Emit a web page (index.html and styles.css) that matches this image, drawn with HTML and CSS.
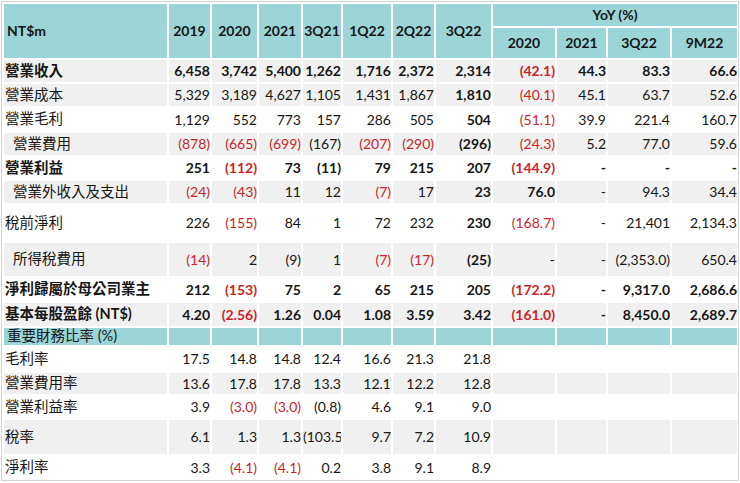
FILE: index.html
```html
<!DOCTYPE html>
<html lang="zh-Hant">
<head>
<meta charset="utf-8">
<title>NT$m</title>
<link rel="stylesheet" href="styles.css">
</head>
<body>
<div class="frame">
  <div class="sheet">
    <div class="c h hs hl">NT$m</div>
    <div class="c h hs">2019</div>
    <div class="c h hs">2020</div>
    <div class="c h hs">2021</div>
    <div class="c h hs">3Q21</div>
    <div class="c h hs">1Q22</div>
    <div class="c h hs">2Q22</div>
    <div class="c h hs">3Q22</div>
    <div class="c h yoy">YoY (%)</div>
    <div class="c h">2020</div>
    <div class="c h">2021</div>
    <div class="c h">3Q22</div>
    <div class="c h">9M22</div>

    <div class="row g b">
      <div class="c l">營業收入</div>
      <div class="c">6,458</div><div class="c">3,742</div><div class="c">5,400</div><div class="c">1,262</div><div class="c">1,716</div><div class="c">2,372</div><div class="c">2,314</div>
      <div class="c r">(42.1)</div><div class="c">44.3</div><div class="c">83.3</div><div class="c">66.6</div>
    </div>
    <div class="row g">
      <div class="c l">營業成本</div>
      <div class="c">5,329</div><div class="c">3,189</div><div class="c">4,627</div><div class="c">1,105</div><div class="c">1,431</div><div class="c">1,867</div><div class="c bd">1,810</div>
      <div class="c r">(40.1)</div><div class="c">45.1</div><div class="c">63.7</div><div class="c">52.6</div>
    </div>
    <div class="row w">
      <div class="c l">營業毛利</div>
      <div class="c">1,129</div><div class="c">552</div><div class="c">773</div><div class="c">157</div><div class="c">286</div><div class="c">505</div><div class="c bd">504</div>
      <div class="c r">(51.1)</div><div class="c">39.9</div><div class="c">221.4</div><div class="c">160.7</div>
    </div>
    <div class="row g">
      <div class="c l ind">營業費用</div>
      <div class="c r">(878)</div><div class="c r">(665)</div><div class="c r">(699)</div><div class="c">(167)</div><div class="c r">(207)</div><div class="c r">(290)</div><div class="c bd">(296)</div>
      <div class="c r">(24.3)</div><div class="c">5.2</div><div class="c">77.0</div><div class="c">59.6</div>
    </div>
    <div class="row w b">
      <div class="c l">營業利益</div>
      <div class="c">251</div><div class="c r">(112)</div><div class="c">73</div><div class="c">(11)</div><div class="c">79</div><div class="c">215</div><div class="c">207</div>
      <div class="c r">(144.9)</div><div class="c">-</div><div class="c">-</div><div class="c">-</div>
    </div>
    <div class="row g">
      <div class="c l ind">營業外收入及支出</div>
      <div class="c r">(24)</div><div class="c r">(43)</div><div class="c">11</div><div class="c">12</div><div class="c r">(7)</div><div class="c">17</div><div class="c bd">23</div>
      <div class="c bd">76.0</div><div class="c">-</div><div class="c">94.3</div><div class="c">34.4</div>
    </div>
    <div class="row w">
      <div class="c l">稅前淨利</div>
      <div class="c">226</div><div class="c r">(155)</div><div class="c">84</div><div class="c">1</div><div class="c">72</div><div class="c">232</div><div class="c bd">230</div>
      <div class="c r">(168.7)</div><div class="c">-</div><div class="c">21,401</div><div class="c">2,134.3</div>
    </div>
    <div class="row g">
      <div class="c l ind">所得稅費用</div>
      <div class="c r">(14)</div><div class="c">2</div><div class="c">(9)</div><div class="c">1</div><div class="c r">(7)</div><div class="c r">(17)</div><div class="c bd">(25)</div>
      <div class="c">-</div><div class="c">-</div><div class="c">(2,353.0)</div><div class="c">650.4</div>
    </div>
    <div class="row w b">
      <div class="c l">淨利歸屬於母公司業主</div>
      <div class="c">212</div><div class="c r">(153)</div><div class="c">75</div><div class="c">2</div><div class="c">65</div><div class="c">215</div><div class="c">205</div>
      <div class="c r">(172.2)</div><div class="c">-</div><div class="c">9,317.0</div><div class="c">2,686.6</div>
    </div>
    <div class="row g b">
      <div class="c l">基本每股盈餘 (NT$)</div>
      <div class="c">4.20</div><div class="c r">(2.56)</div><div class="c">1.26</div><div class="c">0.04</div><div class="c">1.08</div><div class="c">3.59</div><div class="c">3.42</div>
      <div class="c r">(161.0)</div><div class="c">-</div><div class="c">8,450.0</div><div class="c">2,689.7</div>
    </div>
    <div class="row t">
      <div class="c l sec">重要財務比率 (%)</div>
      <div class="c"></div><div class="c"></div><div class="c"></div><div class="c"></div><div class="c"></div><div class="c"></div><div class="c"></div>
      <div class="c"></div><div class="c"></div><div class="c"></div><div class="c"></div>
    </div>
    <div class="row w">
      <div class="c l">毛利率</div>
      <div class="c">17.5</div><div class="c">14.8</div><div class="c">14.8</div><div class="c">12.4</div><div class="c">16.6</div><div class="c">21.3</div><div class="c">21.8</div>
      <div class="c"></div><div class="c"></div><div class="c"></div><div class="c"></div>
    </div>
    <div class="row g">
      <div class="c l">營業費用率</div>
      <div class="c">13.6</div><div class="c">17.8</div><div class="c">17.8</div><div class="c">13.3</div><div class="c">12.1</div><div class="c">12.2</div><div class="c">12.8</div>
      <div class="c"></div><div class="c"></div><div class="c"></div><div class="c"></div>
    </div>
    <div class="row w">
      <div class="c l">營業利益率</div>
      <div class="c">3.9</div><div class="c r">(3.0)</div><div class="c r">(3.0)</div><div class="c">(0.8)</div><div class="c">4.6</div><div class="c">9.1</div><div class="c">9.0</div>
      <div class="c"></div><div class="c"></div><div class="c"></div><div class="c"></div>
    </div>
    <div class="row g">
      <div class="c l">稅率</div>
      <div class="c">6.1</div><div class="c">1.3</div><div class="c">1.3</div><div class="c clip">(103.5)</div><div class="c">9.7</div><div class="c">7.2</div><div class="c">10.9</div>
      <div class="c"></div><div class="c"></div><div class="c"></div><div class="c"></div>
    </div>
    <div class="row w">
      <div class="c l">淨利率</div>
      <div class="c">3.3</div><div class="c r">(4.1)</div><div class="c r">(4.1)</div><div class="c">0.2</div><div class="c">3.8</div><div class="c">9.1</div><div class="c">8.9</div>
      <div class="c"></div><div class="c"></div><div class="c"></div><div class="c"></div>
    </div>
  </div>
</div>
</body>
</html>
```

FILE: styles.css
```css
body {
  margin: 0;
  background: #ffffff;
  font-family: "Lato", "Noto Sans CJK TC", sans-serif;
  color: #161616;
}

.frame {
  margin: 1px;
  width: 733px;
  border: 1px solid #d4d4d4;
  padding: 2px 1px 1px 2px;
  background: #ffffff;
}

.sheet {
  display: grid;
  grid-template-columns: 163px 41px 45px 42px 38px 48px 41px 55px 62px 49px 62px 65px;
  grid-template-rows: 22px 30px 22px 22px 23px 22px 22px 22px 36px 33px 23px 23px 17px 24px 21px 22px 34px 23px;
  gap: 2px;
}

.row {
  display: contents;
}

.c {
  display: flex;
  align-items: center;
  justify-content: flex-end;
  font-size: 14px;
  line-height: 1;
  white-space: nowrap;
  overflow: hidden;
  padding-right: 0;
}

.g > .c {
  background: #f0f0f0;
}

.w > .c {
  background: #ffffff;
}

.t > .c {
  background: #9cd5d7;
}

.h {
  background: #9cd5d7;
  font-weight: 700;
  justify-content: center;
  font-size: 14px;
}

.hs {
  grid-row: span 2;
}

.hl {
  justify-content: flex-start;
  padding-left: 3px;
}

.yoy {
  grid-column: span 4;
}

.l {
  justify-content: flex-start;
  font-size: 14.5px;
  padding-left: 1px;
}

.ind {
  padding-left: 9px;
}

.sec {
  padding-left: 3px;
}

.b > .c,
.bd {
  font-weight: 700;
}

.r {
  color: #cc1f27;
}

.clip {
  justify-content: flex-start;
}
```
